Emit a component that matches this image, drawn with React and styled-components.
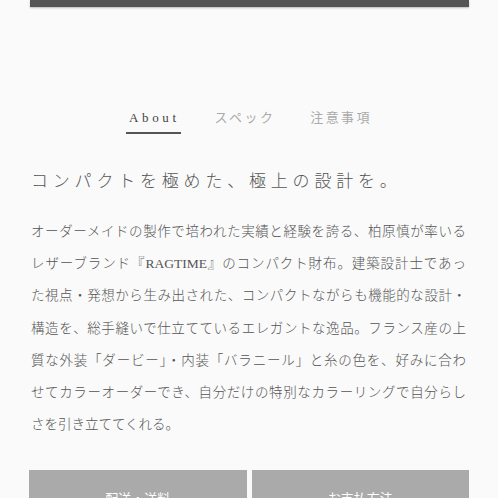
import styled, { createGlobalStyle } from "styled-components";

const GlobalStyle = createGlobalStyle`
    body {
        margin: 0;
        background-color: #fafafa;
        font-family: "Liberation Serif", "Noto Sans CJK JP", serif;
    }
`;

const tabs = ["About", "スペック", "注意事項"];

const lines = [
    "オーダーメイドの製作で培われた実績と経験を誇る、柏原慎が率いる",
    "レザーブランド『RAGTIME』のコンパクト財布。建築設計士であっ",
    "た視点・発想から生み出された、コンパクトながらも機能的な設計・",
    "構造を、総手縫いで仕立てているエレガントな逸品。フランス産の上",
    "質な外装「ダービー」・内装「バラニール」と糸の色を、好みに合わ",
    "せてカラーオーダーでき、自分だけの特別なカラーリングで自分らし",
    "さを引き立ててくれる。",
];

export default function App() {
    return (
        <Page>
            <GlobalStyle />
            <TopBar />
            <TabNav>
                {tabs.map((t, i) => (
                    <Tab key={t} active={i === 0}>{t}</Tab>
                ))}
            </TabNav>
            <Heading>コンパクトを極めた、極上の設計を。</Heading>
            <Body>
                {lines.map((l, i) => (
                    <Line key={i} last={i === lines.length - 1}>{l}</Line>
                ))}
            </Body>
            <ButtonRow>
                <InfoButton>配送・送料</InfoButton>
                <InfoButton>お支払方法</InfoButton>
            </ButtonRow>
        </Page>
    );
}

const Page = styled.main`
    box-sizing: border-box;
    width: 498px;
    height: 498px;
    overflow: hidden;
    padding: 0 29px 0 30px;
`;

const TopBar = styled.div`
    height: 7px;
    background-color: #555;
    box-shadow: 0 1px 2px rgba(0, 0, 0, 0.25);
`;

const TabNav = styled.nav`
    display: flex;
    justify-content: center;
    gap: 31px;
    margin-top: 101px;
    padding-left: 0;
`;

const Tab = styled.span`
    font-size: 13px;
    line-height: 20px;
    letter-spacing: ${props => props.active ? "3.6px" : "2.4px"};
    color: ${props => props.active ? "#444" : "#aaa"};
    padding: 0 1px 4px 3px;
    border-bottom: 2px solid ${props => props.active ? "#555" : "transparent"};
`;

const Heading = styled.h2`
    margin: 36px 0 0 1px;
    font-size: 17px;
    font-weight: 300;
    line-height: 24px;
    letter-spacing: 4.8px;
    color: #555;
`;

const Body = styled.div`
    margin: 22px 0 0 1px;
    font-size: 13.5px;
    line-height: 32.2px;
    color: #555;
    font-weight: 300;
    padding-right: 3px;
`;

const Line = styled.span`
    display: block;
    white-space: nowrap;
    text-align: ${props => props.last ? "left" : "justify"};
    text-align-last: ${props => props.last ? "left" : "justify"};
    ${props => props.last ? "" : "text-justify: inter-character;"}
`;

const ButtonRow = styled.div`
    display: grid;
    grid-template-columns: 1fr 1fr;
    gap: 5px;
    margin-top: 29px;
    margin-left: -1px;
`;

const InfoButton = styled.div`
    height: 50px;
    background-color: #aaa;
    color: #fff;
    font-size: 13px;
    text-align: center;
    padding-top: 18px;
    box-sizing: border-box;
`;
